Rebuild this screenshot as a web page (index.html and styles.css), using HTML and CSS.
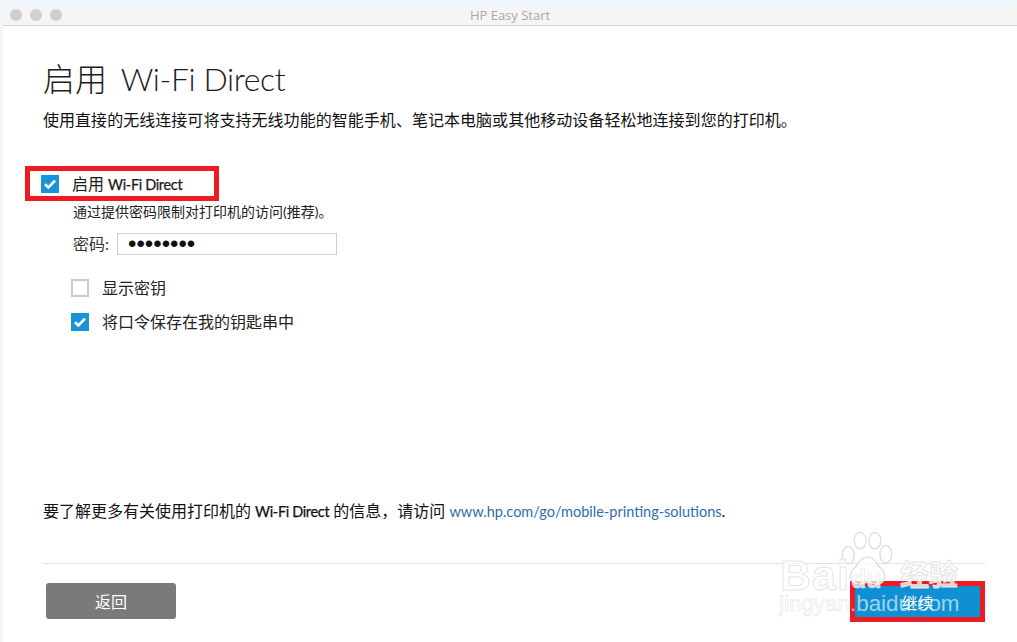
FILE: index.html
```html
<!DOCTYPE html>
<html lang="zh">
<head>
<meta charset="utf-8">
<title>HP Easy Start</title>
<link rel="stylesheet" href="styles.css">
</head>
<body>
<div class="window">
  <header class="titlebar">
    <div class="lights"><i></i><i></i><i></i></div>
    <div class="title">HP Easy Start</div>
  </header>
  <main class="content">
    <h1>启用 <span class="h-latin">Wi-Fi Direct</span></h1>
    <p class="intro">使用直接的无线连接可将支持无线功能的智能手机、笔记本电脑或其他移动设备轻松地连接到您的打印机。</p>
    <div class="enable-row">
      <span class="check on"><svg viewBox="0 0 18 18"><path d="M4 9.2l3.4 3.3L14 5.6" fill="none" stroke="#fff" stroke-width="2.6"/></svg></span>
      <span class="enable-label">启用 <span class="latin">Wi-Fi Direct</span></span>
      <span class="redbox"></span>
    </div>
    <div class="options">
      <p class="hint">通过提供密码限制对打印机的访问(推荐)。</p>
      <div class="pw-row">
        <label>密码:</label>
        <div class="pw-input">••••••••</div>
      </div>
      <div class="opt first"><span class="check"></span><span>显示密钥</span></div>
      <div class="opt"><span class="check on"><svg viewBox="0 0 18 18"><path d="M4 9.2l3.4 3.3L14 5.6" fill="none" stroke="#fff" stroke-width="2.6"/></svg></span><span>将口令保存在我的钥匙串中</span></div>
    </div>
    <p class="more">要了解更多有关使用打印机的 <b class="latin">Wi-Fi Direct</b> 的信息，请访问 <a href="#">www.hp.com/go/mobile-printing-solutions</a>.</p>
    <footer class="actions">
      <button class="btn back">返回</button>
      <button class="btn next">继续</button>
    </footer>
  </main>
</div>
<div class="watermark">
  <svg class="paw" viewBox="0 0 60 60" preserveAspectRatio="none">
    <g fill="none" stroke="#dfdfdf" stroke-width="1.5">
      <ellipse cx="9" cy="24" rx="6.5" ry="9"/>
      <ellipse cx="22" cy="9" rx="6.5" ry="8.5"/>
      <ellipse cx="38" cy="9" rx="6.5" ry="8.5"/>
      <ellipse cx="50" cy="23" rx="6.5" ry="9"/>
      <path fill="rgba(255,255,255,.72)" d="M30 26c-8 0-10 8-15 12-6 5-4 16 6 16 4 0 6-2 9-2s6 2 10 2c10 0 11-11 5-16-5-4-7-12-15-12z"/>
    </g>
  </svg>
  <span class="wm-bai">Bai</span>
  <span class="wm-du">du</span>
  <span class="wm-jy">经验</span>
  <span class="wm-url">jingyan<em>.baidu.com</em></span>
</div>
</body>
</html>
```
FILE: styles.css
```css
* { box-sizing: border-box; }
html, body { margin: 0; height: 100%; overflow: hidden; }
body {
  position: relative;
  width: 1017px;
  height: 642px;
  padding: 4px 0 0 3px;
  background: #eff6fc;
  font-family: Lato, "Noto Sans CJK SC", sans-serif;
  color: #1a1a1a;
}
.window { height: 638px; background: #fff; display: flex; flex-direction: column; }
.titlebar {
  position: relative;
  height: 22px;
  flex: none;
  background: #f5f5f5;
  border-bottom: 1px solid #d4d4d4;
  display: flex;
  align-items: center;
  justify-content: center;
}
.lights { position: absolute; left: 7px; top: 5px; display: flex; gap: 8px; }
.lights i { width: 12px; height: 12px; border-radius: 50%; background: #d0d0d0; display: block; }
.title { font: 13px "Open Sans", "Liberation Sans", sans-serif; color: #a9a9a9; }
.content { flex: 1; padding: 0 32px 0 40px; display: flex; flex-direction: column; }
h1 {
  margin: 33px 0 0;
  height: 40px;
  font: 300 32px/40px Lato, "Noto Sans CJK SC", sans-serif;
  color: #1c1c1c;
  white-space: nowrap;
}
.h-latin { margin-left: 5px; letter-spacing: -0.4px; }
.intro {
  margin: 11px 0 0;
  font: 16px/20px Lato, "Noto Sans CJK SC", sans-serif;
  letter-spacing: 0.04px;
  color: #111;
  white-space: nowrap;
}
.latin { font-size: 14.5px; letter-spacing: -0.35px; -webkit-text-stroke: 0.25px currentColor; }
.enable-row {
  position: relative;
  margin: 42px 0 0 -2px;
  height: 24px;
  display: flex;
  align-items: center;
  gap: 13px;
  font: 16px/20px Lato, "Noto Sans CJK SC", sans-serif;
}
.enable-label { font-weight: 400; }
.redbox {
  position: absolute;
  left: -16px;
  top: -6px;
  width: 194px;
  height: 35px;
  border: 5px solid #ed1c24;
  pointer-events: none;
}
.check {
  width: 18px;
  height: 18px;
  flex: none;
  border: 2px solid #cbcbcb;
  background: #fff;
  display: block;
}
.check.on { background: #1a94d6; border: 0; }
.check svg { display: block; width: 18px; height: 18px; }
.options { margin-left: 30px; font: 16px/20px Lato, "Noto Sans CJK SC", sans-serif; }
.hint { margin: 6px 0 0; font-size: 14px; line-height: 20px; color: #222; white-space: nowrap; }
.pw-row { margin-top: 11px; display: flex; align-items: center; gap: 8px; }
.pw-row label { font-size: 16px; color: #333; }
.pw-input {
  width: 220px;
  height: 22px;
  border: 1px solid #cfcfcf;
  padding-left: 10px;
  font: 24px/19px "Liberation Sans", sans-serif;
  color: #111;
}
.opt { display: flex; align-items: center; gap: 13px; height: 24px; margin-top: 10px; margin-left: -2px; color: #222; }
.opt.first { margin-top: 21px; }
.more {
  margin: 167px 0 0;
  font: 16px/20px Lato, "Noto Sans CJK SC", sans-serif;
  color: #111;
  white-space: nowrap;
}
.more b { font-weight: 400; }
.more a { font-size: 14.5px; color: #2f6ea8; text-decoration: none; }
.actions {
  margin-top: 41px;
  padding: 19px 0 0 3px;
  border-top: 1px solid #e2e2e2;
  display: flex;
  justify-content: space-between;
}
.btn {
  height: 36px;
  border: 0;
  border-radius: 3px;
  color: #fff;
  font: 16px "Noto Sans CJK SC", sans-serif;
  padding: 0;
}
.back { width: 130px; background: #7a7a7a; }
.next {
  width: 135px;
  height: 41px;
  margin-top: -2px;
  border-radius: 0;
  border: 5px solid #ed1c24;
  background: #0f90d2;
}
.watermark { position: absolute; inset: 0; pointer-events: none; }
.watermark span { position: absolute; white-space: nowrap; font-family: "Liberation Sans", sans-serif; }
.paw { position: absolute; left: 840px; top: 532px; width: 55px; height: 58px; }
.wm-bai {
  left: 780px; top: 552px;
  font-size: 43px; line-height: 46px; font-weight: 700;
  color: rgba(255,255,255,.7);
  -webkit-text-stroke: 1px #e6e6e6;
  letter-spacing: 1px;
}
.wm-du {
  left: 851px; top: 565px;
  font-size: 25px; line-height: 28px; font-weight: 700;
  color: rgba(255,255,255,.75);
  -webkit-text-stroke: 0.6px #e4e4e4;
}
.wm-jy {
  left: 900px; top: 556px;
  font: 700 29px/34px "Noto Sans CJK SC", sans-serif !important;
  color: rgba(255,255,255,.75);
  -webkit-text-stroke: 1px #e4e4e4;
}
.wm-url {
  left: 779px; top: 589px;
  font-size: 22.4px; line-height: 30px;
  color: rgba(255,255,255,.6);
  -webkit-text-stroke: 0.6px #e6e6e6;
}
.wm-url em { font-style: normal; color: rgba(255,255,255,.6); -webkit-text-stroke: 0; }
```
